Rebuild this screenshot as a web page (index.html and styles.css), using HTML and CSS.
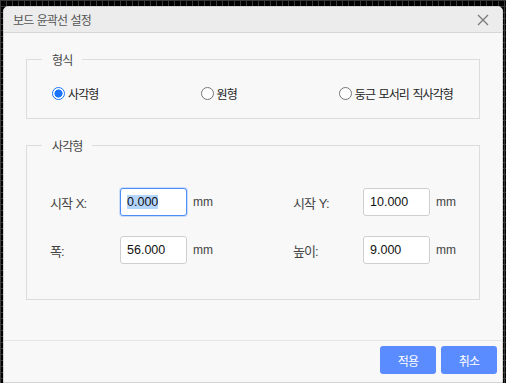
FILE: index.html
```html
<!DOCTYPE html>
<html lang="ko">
<head>
    <meta charset="UTF-8">
    <title>보드 윤곽선 설정</title>
    <link rel="stylesheet" href="styles.css">
</head>
<body>
    <!-- 보드 윤곽선 대화상자 -->
    <div class="dialog">
        <div class="dialog-header">
            <span class="dialog-title ko">보드 윤곽선 설정</span>
            <svg class="close" width="12" height="12" viewBox="0 0 12 12">
                <path d="M1 1 L11 11 M11 1 L1 11" stroke="#7a7a7a" stroke-width="1.3" fill="none"/>
            </svg>
        </div>

        <div class="dialog-body">
            <fieldset class="group">
                <legend class="ko">형식</legend>
                <div class="radio-row">
                    <label class="radio"><span class="dot checked"></span><span class="ko">사각형</span></label>
                    <label class="radio"><span class="dot"></span><span class="ko">원형</span></label>
                    <label class="radio"><span class="dot"></span><span class="ko">둥근 모서리 직사각형</span></label>
                </div>
            </fieldset>

            <fieldset class="group group-rect">
                <legend class="ko">사각형</legend>
                <div class="field-grid">
                    <div class="field">
                        <span class="field-label ko">시작 X:</span>
                        <div class="input focus"><span class="sel">0.000</span></div>
                        <span class="unit">mm</span>
                    </div>
                    <div class="field">
                        <span class="field-label ko">시작 Y:</span>
                        <div class="input">10.000</div>
                        <span class="unit">mm</span>
                    </div>
                    <div class="field">
                        <span class="field-label ko">폭:</span>
                        <div class="input">56.000</div>
                        <span class="unit">mm</span>
                    </div>
                    <div class="field">
                        <span class="field-label ko">높이:</span>
                        <div class="input">9.000</div>
                        <span class="unit">mm</span>
                    </div>
                </div>
            </fieldset>
        </div>

        <div class="dialog-footer">
            <button class="btn ko">적용</button>
            <button class="btn ko">취소</button>
        </div>
    </div>
</body>
</html>
```

FILE: styles.css
```css
* { box-sizing: border-box; }
html, body { height: 100%; }
body {
    margin: 0;
    padding: 6px 3px 0 3px;
    overflow: hidden;
    font-family: "Liberation Sans", "Noto Sans CJK KR", sans-serif;
    font-size: 12px;
    color: #333;
    background-color: #000;
    background-image:
        linear-gradient(to right, #3a3a3a 1px, transparent 1px),
        linear-gradient(to bottom, #3a3a3a 1px, transparent 1px);
    background-size: 6px 6px;
}

/* 한글 글자 폭 보정 */
.ko { letter-spacing: -0.9px; word-spacing: 1px; }

/* 대화상자 */
.dialog {
    width: 500px;
    height: 377px;
    display: flex;
    flex-direction: column;
    background: #f8f8f8;
    border: 1px solid #d4d4d4;
    border-radius: 5px 5px 0 0;
    overflow: hidden;
}
.dialog-header {
    height: 26px;
    flex: none;
    display: flex;
    align-items: center;
    justify-content: space-between;
    padding: 0 13px 0 9px;
    background: #ececec;
    border-bottom: 1px solid #d6d6d6;
}
.dialog-title { color: #555; font-size: 12px; }
.close { display: block; }

.dialog-body {
    flex: 1;
    padding: 18px 22px 0 22px;
}

/* 그룹 박스 */
.group {
    margin: 0;
    padding: 17px 25px 16px 25px;
    border: 1px solid #dcdcdc;
}
.group legend {
    margin-left: -10px;
    padding: 0 10px;
    color: #444;
}
.radio-row {
    display: flex;
    justify-content: space-between;
    align-items: center;
    padding-right: 1px;
}
.radio {
    display: flex;
    align-items: center;
    gap: 3px;
    color: #222;
}
.dot {
    width: 13px;
    height: 13px;
    border-radius: 50%;
    border: 1px solid #777;
    background: #fff;
}
.dot.checked {
    border: 1px solid #1a73ff;
    background: radial-gradient(circle, #1a73ff 0 3.8px, #fff 4.3px);
}

.group-rect {
    margin-top: 18px;
    padding: 34px 20px 35px 23px;
}
.group-rect legend { margin-left: -8px; }
.field-grid {
    display: grid;
    grid-template-columns: 243px 1fr;
    row-gap: 20px;
}
.field {
    display: flex;
    align-items: center;
}
.field-label {
    width: 70px;
    color: #444;
    font-size: 13px;
}
.input {
    width: 67px;
    height: 28px;
    padding: 0 6px;
    display: flex;
    align-items: center;
    background: #fff;
    border: 1px solid #cfcfcf;
    border-radius: 3px;
    color: #111;
    font-size: 12.5px;
}
.input.focus { border-color: #4d8df7; box-shadow: 0 0 0 1px rgba(77,141,247,0.25); }
.sel { background: #b4d5fe; }
.unit { margin-left: 6px; color: #444; }

/* 하단 버튼 */
.dialog-footer {
    flex: none;
    height: 42px;
    display: flex;
    justify-content: flex-end;
    align-items: flex-start;
    gap: 5px;
    padding: 5px 5px 0 0;
    border-top: 1px solid #e6e6e6;
}
.btn {
    width: 56px;
    height: 28px;
    border: none;
    border-radius: 3px;
    background: #5b8cff;
    color: #fff;
    font-family: inherit;
    font-size: 12px;
}
```
